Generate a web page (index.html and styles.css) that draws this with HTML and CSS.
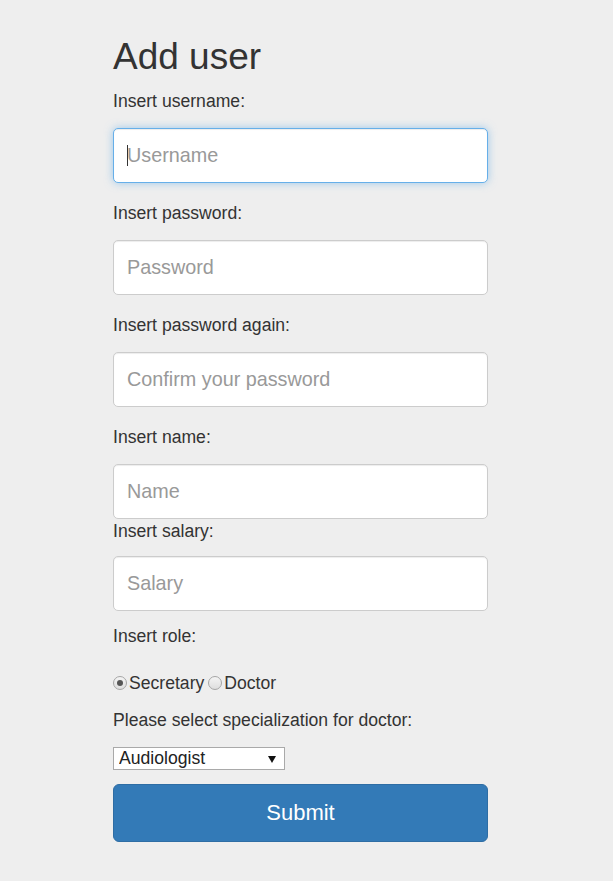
FILE: index.html
```html
<!DOCTYPE html>
<html lang="en">
<head>
<meta charset="utf-8">
<title>Add user</title>
<link rel="stylesheet" href="styles.css">
</head>
<body>
<div class="page">
  <form class="form">
    <h1 class="title">Add user</h1>

    <label class="label">Insert username:</label>
    <div class="field field--focus">
      <input class="input input--focus" type="text" placeholder="Username">
      <span class="caret"></span>
    </div>

    <label class="label">Insert password:</label>
    <input class="input" type="password" placeholder="Password">

    <label class="label">Insert password again:</label>
    <input class="input" type="password" placeholder="Confirm your password">

    <label class="label">Insert name:</label>
    <input class="input input--tight" type="text" placeholder="Name">

    <label class="label label--salary">Insert salary:</label>
    <input class="input input--salary" type="text" placeholder="Salary">

    <label class="label label--role">Insert role:</label>
    <div class="radios">
      <span class="radio radio--checked"></span><span class="radio-text">Secretary</span>
      <span class="radio radio--second"></span><span class="radio-text">Doctor</span>
    </div>

    <label class="label label--spec">Please select specialization for doctor:</label>
    <div class="select-wrap">
      <select class="select">
        <option>Audiologist</option>
      </select>
      <svg class="select-arrow" width="8" height="7" viewBox="0 0 8 7"><path d="M0 0 H8 L4 7 Z" fill="#111"/></svg>
    </div>

    <button class="submit" type="button">Submit</button>
  </form>
</div>
</body>
</html>
```

FILE: styles.css
```css
html, body {
  margin: 0;
  padding: 0;
  background: #eeeeee;
}

body {
  font-family: "Liberation Sans", Arial, Helvetica, sans-serif;
  color: #333333;
  font-size: 17.6px;
  line-height: 25px;
}

.page {
  padding: 36px 0 40px 113px;
}

.form {
  width: 375px;
  display: flex;
  flex-direction: column;
  align-items: stretch;
}

.title {
  font-size: 37px;
  line-height: 41px;
  font-weight: 400;
  margin: 0 0 12px 0;
}

.label {
  display: block;
  font-size: 17.6px;
  line-height: 25px;
  margin: 0 0 14px 0;
}

.label--salary {
  margin-bottom: 12px;
}

.label--role {
  margin-bottom: 22px;
}

.label--spec {
  margin-bottom: 14px;
}

.field {
  position: relative;
  margin-bottom: 18px;
}

.input {
  box-sizing: border-box;
  display: block;
  width: 100%;
  height: 55px;
  margin: 0 0 18px 0;
  padding: 0 13px;
  font-family: "Liberation Sans", Arial, Helvetica, sans-serif;
  font-size: 19.8px;
  color: #555555;
  background: #ffffff;
  border: 1px solid #cccccc;
  border-radius: 5px;
  box-shadow: inset 0 1px 1px rgba(0, 0, 0, 0.075);
  outline: none;
}

.input::placeholder {
  color: #999999;
}

.field .input {
  margin-bottom: 0;
}

.input--focus {
  border-color: #66afe9;
  box-shadow: inset 0 1px 1px rgba(0, 0, 0, 0.075), 0 0 8px rgba(102, 175, 233, 0.6);
}

.input--tight {
  margin-bottom: 0;
}

.input--salary {
  margin-bottom: 13px;
}

.caret {
  position: absolute;
  left: 14px;
  top: 17px;
  width: 1px;
  height: 21px;
  background: #333333;
}

.radios {
  display: flex;
  align-items: center;
  height: 25px;
  margin-bottom: 12px;
}

.radio {
  box-sizing: border-box;
  width: 14px;
  height: 14px;
  border-radius: 50%;
  border: 1px solid #a6a6a6;
  background: linear-gradient(#f4f4f4, #dedede);
  display: flex;
  align-items: center;
  justify-content: center;
  margin-right: 2px;
  margin-top: -1px;
}

.radio--checked::after {
  content: "";
  width: 6px;
  height: 6px;
  border-radius: 50%;
  background: #555555;
}

.radio--second {
  margin-left: 4px;
}

.radio-text {
  font-size: 17.6px;
  line-height: 25px;
}

.select-wrap {
  position: relative;
  width: 172px;
  height: 23px;
  margin-bottom: 14px;
}

.select {
  appearance: none;
  -webkit-appearance: none;
  box-sizing: border-box;
  display: block;
  width: 100%;
  height: 23px;
  margin: 0;
  padding: 0 0 0 5px;
  font-family: "Liberation Sans", Arial, Helvetica, sans-serif;
  font-size: 17.6px;
  line-height: 21px;
  color: #222222;
  background: #ffffff;
  border: 1px solid #a9a9a9;
  border-radius: 0;
  outline: none;
}

.select-arrow {
  position: absolute;
  right: 9px;
  top: 9px;
  pointer-events: none;
}

.submit {
  box-sizing: border-box;
  width: 100%;
  height: 58px;
  margin: 0;
  padding: 0;
  font-family: "Liberation Sans", Arial, Helvetica, sans-serif;
  font-size: 22px;
  color: #ffffff;
  background: #337ab7;
  border: 1px solid #2e6da4;
  border-radius: 6px;
  cursor: pointer;
}
```
